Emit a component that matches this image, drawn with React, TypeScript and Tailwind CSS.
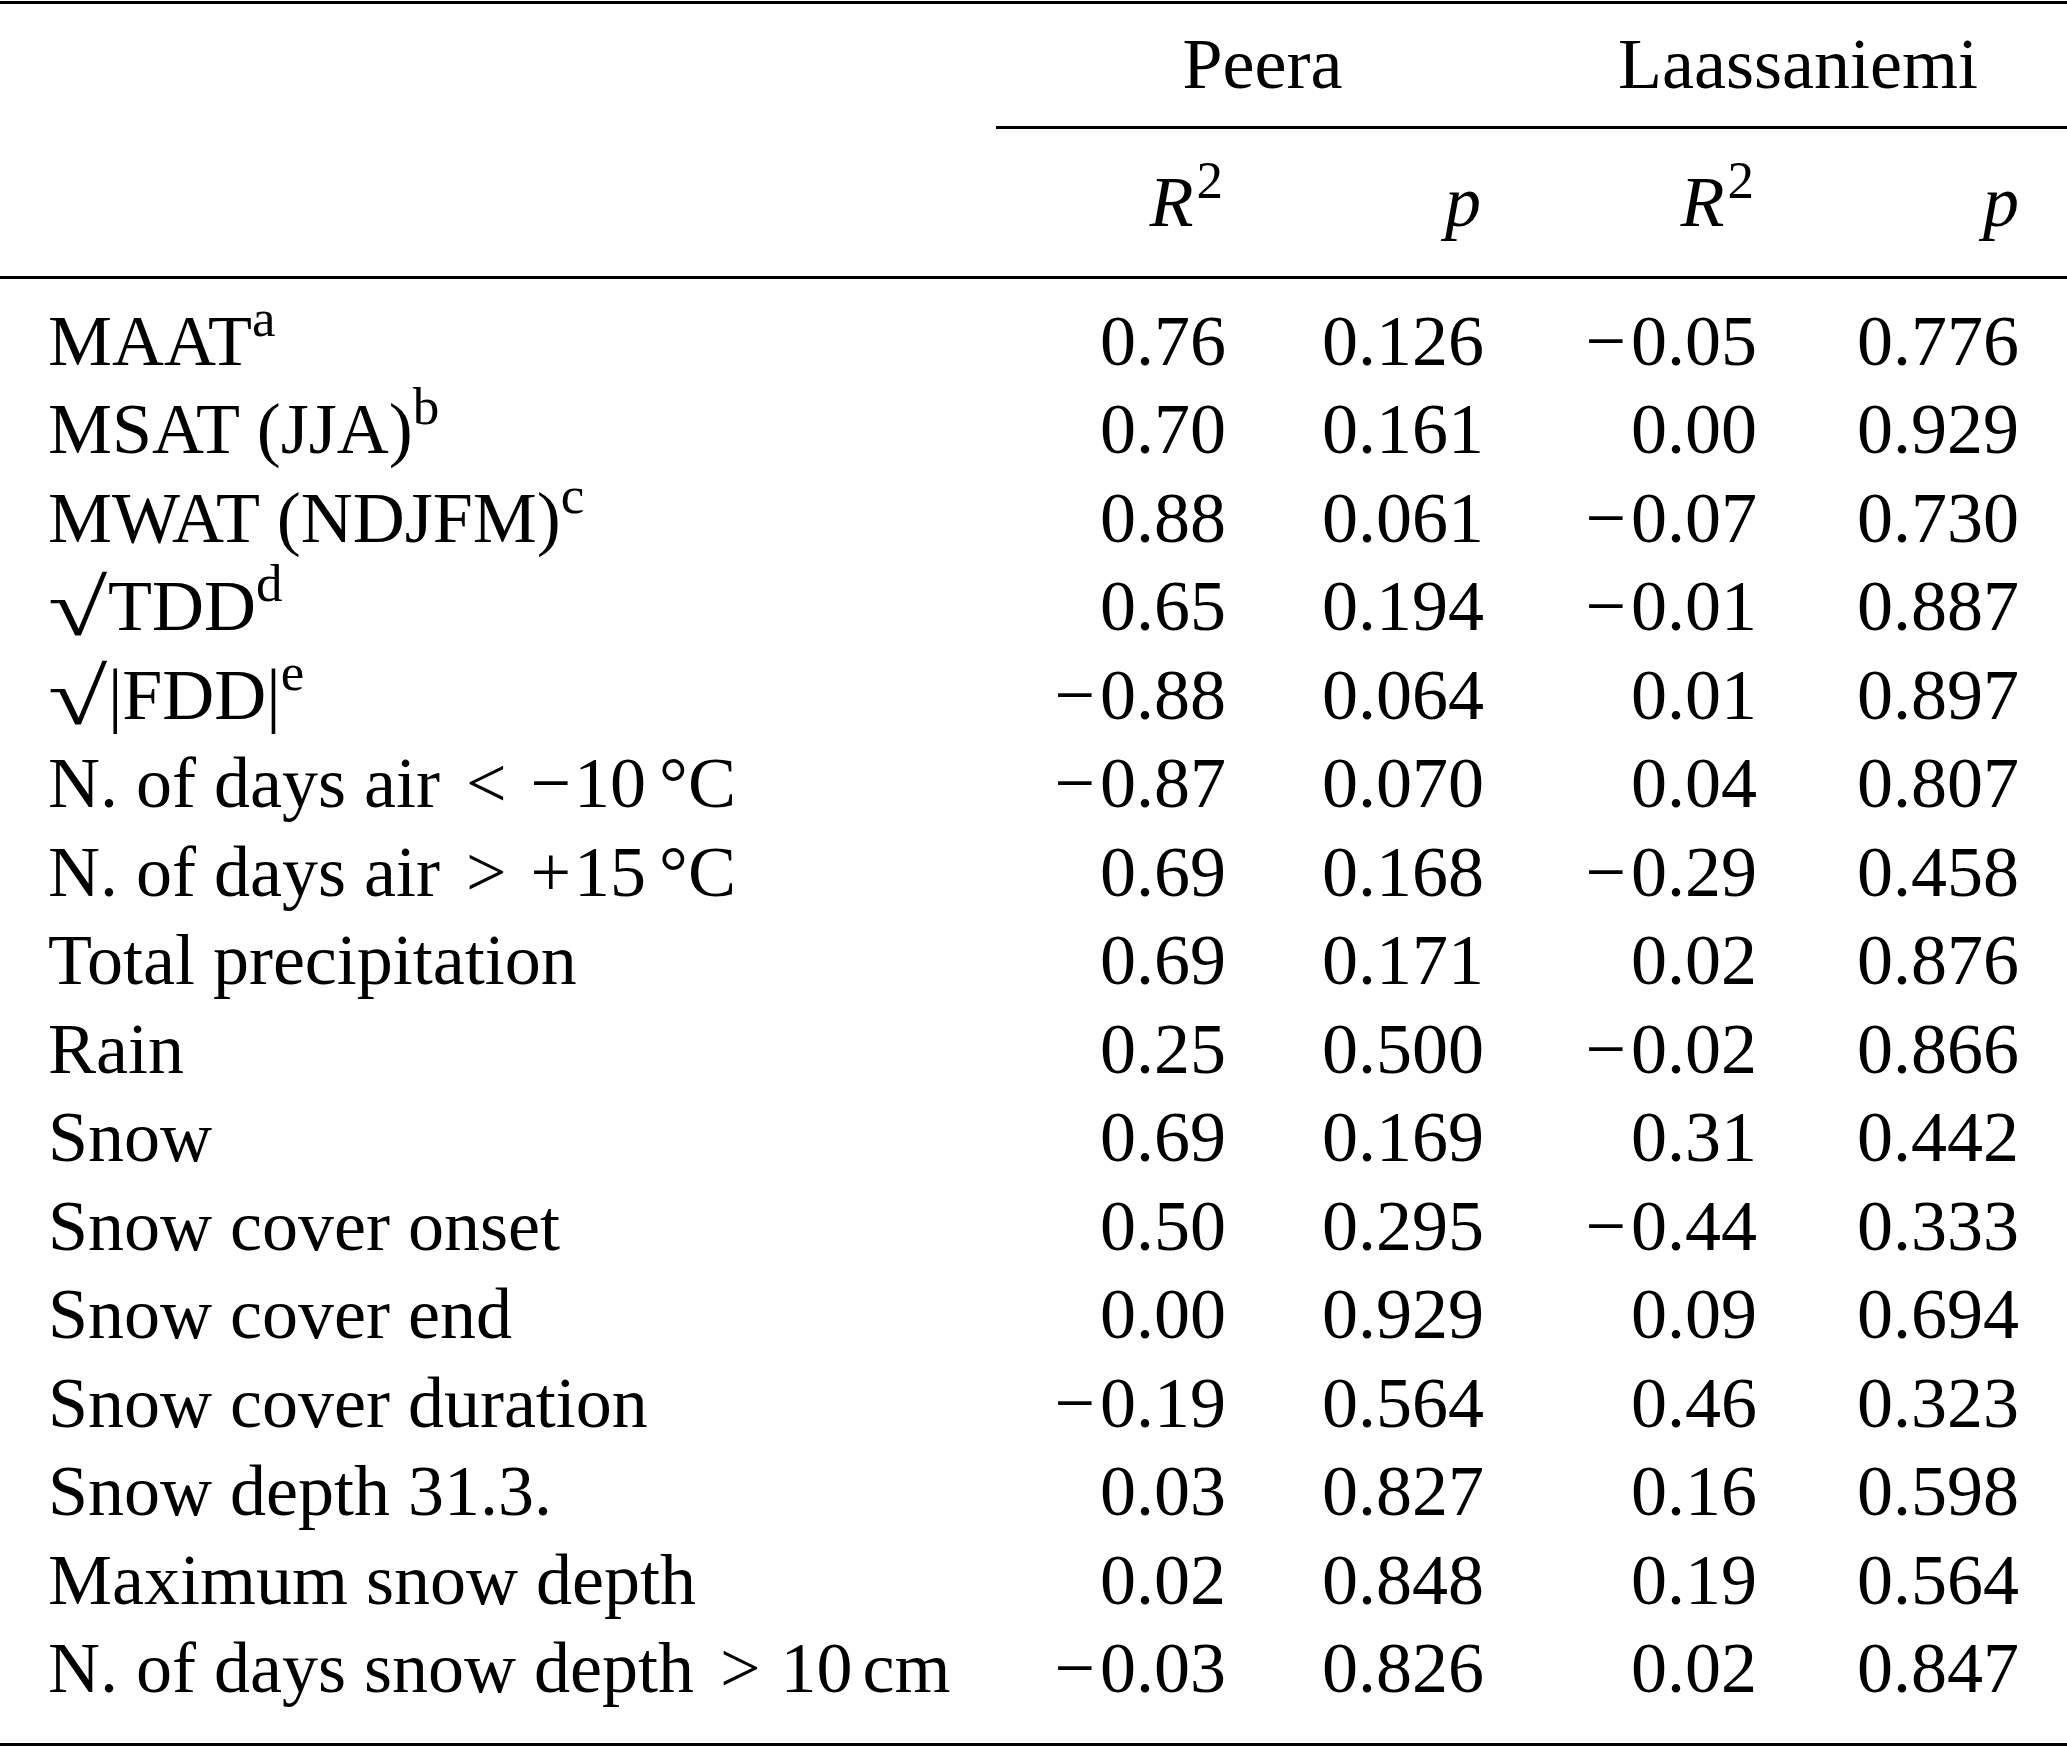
import React from "react";

const cols = "grid grid-cols-[996px_278px_255px_276px_262px]";

type Row = { label: React.ReactNode; values: string[] };

const Sup = ({ children }: { children: React.ReactNode }) => (
  <sup className="text-[53px] top-[-29px]">{children}</sup>
);

// radical sign, a bit bigger and wider like the math surd (kept inside its row)
const Surd = () => (
  <span className="relative inline-block top-[5px] text-[80px] leading-[0] mr-[16px] scale-x-[1.35] origin-left">
    √
  </span>
);

const rows: Row[] = [
  { label: <>MAAT<Sup>a</Sup></>, values: ["0.76", "0.126", "-0.05", "0.776"] },
  { label: <>MSAT (JJA)<Sup>b</Sup></>, values: ["0.70", "0.161", "0.00", "0.929"] },
  { label: <>MWAT (NDJFM)<Sup>c</Sup></>, values: ["0.88", "0.061", "-0.07", "0.730"] },
  { label: <><Surd />TDD<Sup>d</Sup></>, values: ["0.65", "0.194", "-0.01", "0.887"] },
  { label: <><Surd />|FDD|<Sup>e</Sup></>, values: ["-0.88", "0.064", "0.01", "0.897"] },
  {
    label: (
      <>
        N. of days air<span className="ml-[26px]">&lt;</span>
        <span className="ml-[24px] mr-[3px]">−</span>10<span className="ml-[13px]">°C</span>
      </>
    ),
    values: ["-0.87", "0.070", "0.04", "0.807"],
  },
  {
    label: (
      <>
        N. of days air<span className="ml-[26px]">&gt;</span>
        <span className="ml-[24px] mr-[3px]">+</span>15<span className="ml-[13px]">°C</span>
      </>
    ),
    values: ["0.69", "0.168", "-0.29", "0.458"],
  },
  { label: "Total precipitation", values: ["0.69", "0.171", "0.02", "0.876"] },
  { label: "Rain", values: ["0.25", "0.500", "-0.02", "0.866"] },
  { label: "Snow", values: ["0.69", "0.169", "0.31", "0.442"] },
  { label: "Snow cover onset", values: ["0.50", "0.295", "-0.44", "0.333"] },
  { label: "Snow cover end", values: ["0.00", "0.929", "0.09", "0.694"] },
  { label: "Snow cover duration", values: ["-0.19", "0.564", "0.46", "0.323"] },
  { label: "Snow depth 31.3.", values: ["0.03", "0.827", "0.16", "0.598"] },
  { label: "Maximum snow depth", values: ["0.02", "0.848", "0.19", "0.564"] },
  {
    label: (
      <>
        N. of days snow depth<span className="ml-[26px]">&gt;</span>
        <span className="ml-[20px]">10</span>
        <span className="ml-[10px]">cm</span>
      </>
    ),
    values: ["-0.03", "0.826", "0.02", "0.847"],
  },
];

function Num({ v }: { v: string }) {
  if (v.startsWith("-")) {
    return (
      <>
        <span className="mr-[5px]">−</span>
        {v.slice(1)}
      </>
    );
  }
  return <>{v}</>;
}

export default function App() {
  return (
    <div className="w-[2067px] h-[1747px] bg-white text-black font-['Liberation_Serif',serif] text-[72px] leading-[88.5px] overflow-hidden">
      {/* top rule */}
      <div className="mt-px h-[3px] bg-black" />

      {/* site header */}
      <div className={`${cols} mt-[16px]`}>
        <div />
        <div className="col-span-2 px-[48px] text-center">Peera</div>
        <div className="col-span-2 px-[48px] text-center">Laassaniemi</div>
      </div>
      <div className={`${cols} mt-[17.5px]`}>
        <div className="col-start-2 col-span-4 h-[3px] bg-black" />
      </div>

      {/* stat header */}
      <div className={`${cols} mt-[29px]`}>
        <div />
        {[0, 1].map((i) => (
          <React.Fragment key={i}>
            <div className="px-[48px] text-right whitespace-nowrap">
              <i>R</i>
              <sup className="text-[53px] top-[-28px] ml-[3px] mr-[3px]">2</sup>
            </div>
            <div className="px-[48px] text-right">
              <i>p</i>
            </div>
          </React.Fragment>
        ))}
      </div>

      <div className="mt-[29.5px] h-[3px] bg-black" />

      {/* body */}
      <div className="mt-[17.5px]">
        {rows.map((r, i) => (
          <div key={i} className={cols}>
            <div className="px-[48px] whitespace-nowrap">{r.label}</div>
            {r.values.map((v, j) => (
              <div key={j} className="px-[48px] text-right whitespace-nowrap">
                <Num v={v} />
              </div>
            ))}
          </div>
        ))}
      </div>

      {/* bottom rule */}
      <div className="mt-[30.5px] h-[3px] bg-black" />
    </div>
  );
}
